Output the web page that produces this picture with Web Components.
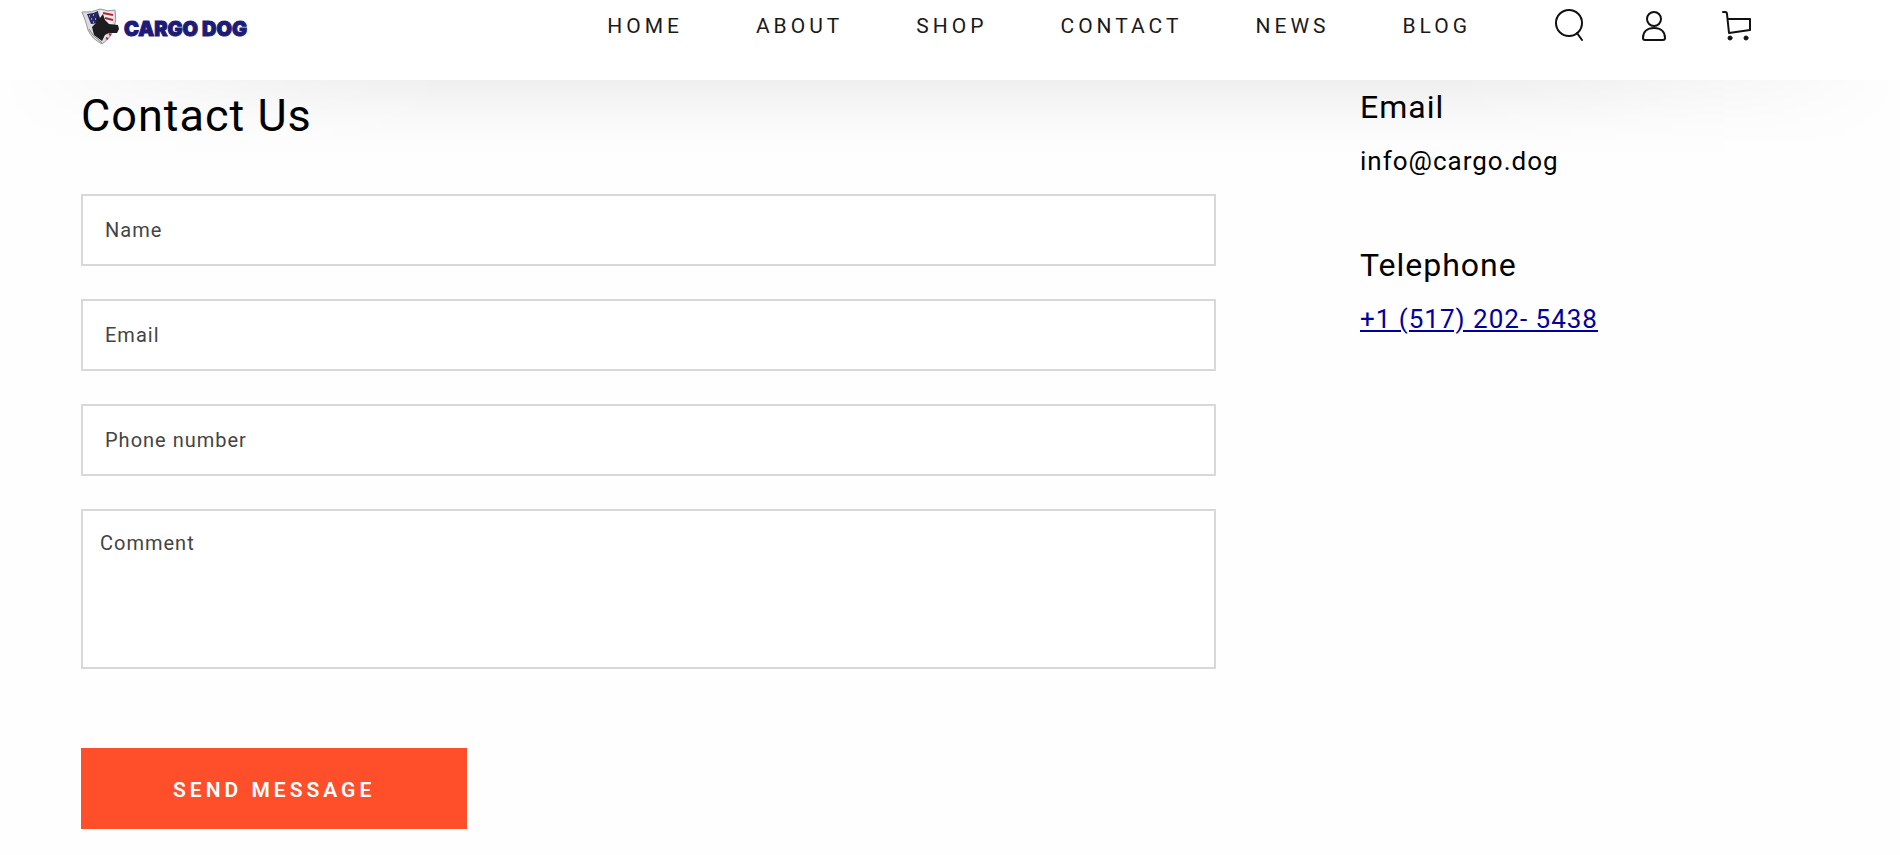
<!DOCTYPE html>
<html lang="en">
<head>
<meta charset="utf-8">
<title>Contact Us - Cargo Dog</title>
<style>
body {
    margin: 0;
    background: #fefefe;
    color: #000;
    font-family: Roboto, "Liberation Sans", sans-serif;
    font-size: 21px;
    letter-spacing: 1px;
}
</style>
</head>
<body>
<site-header>
    <brand-logo slot="logo"></brand-logo>
    <nav-link href="#home">HOME</nav-link>
    <nav-link href="#about">ABOUT</nav-link>
    <nav-link href="#shop">SHOP</nav-link>
    <nav-link href="#contact">CONTACT</nav-link>
    <nav-link href="#news">NEWS</nav-link>
    <nav-link href="#blog">BLOG</nav-link>
    <icon-button slot="tools" icon="search" label="Search"></icon-button>
    <icon-button slot="tools" icon="account" label="Log in"></icon-button>
    <icon-button slot="tools" icon="cart" label="Cart"></icon-button>
</site-header>
<contact-page>
    <contact-form slot="form"></contact-form>
    <contact-detail heading="Email">info@cargo.dog</contact-detail>
    <contact-detail heading="Telephone" href="tel:+15172025438">+1 (517) 202- 5438</contact-detail>
</contact-page>

<script>
class SiteHeader extends HTMLElement {
    constructor() {
        super();
        this.attachShadow({ mode: "open" }).innerHTML = `<style>
:host {
    display: block;
    position: relative;
    background: #fff;
}
/* soft shadow that fades out towards both sides of the window */
:host::after {
    content: "";
    position: absolute;
    top: 100%;
    left: 0;
    right: 0;
    height: 80px;
    background: linear-gradient(rgba(0, 0, 0, 0.06), rgba(0, 0, 0, 0.04) 25%, rgba(0, 0, 0, 0.02) 50%, rgba(0, 0, 0, 0.005) 80%, transparent);
    -webkit-mask-image: linear-gradient(90deg, transparent, rgba(0, 0, 0, 0.4) 7%, rgba(0, 0, 0, 0.8) 16%, #000 24%, #000 76%, rgba(0, 0, 0, 0.8) 84%, rgba(0, 0, 0, 0.4) 93%, transparent);
    mask-image: linear-gradient(90deg, transparent, rgba(0, 0, 0, 0.4) 7%, rgba(0, 0, 0, 0.8) 16%, #000 24%, #000 76%, rgba(0, 0, 0, 0.8) 84%, rgba(0, 0, 0, 0.4) 93%, transparent);
    pointer-events: none;
}
header {
    display: grid;
    grid-template-columns: 1fr auto auto;
    align-items: center;
    column-gap: 72px;
    padding: 0 137px 28px 81px;
}
nav {
    display: flex;
    gap: 73px;
}
.tools {
    display: flex;
    gap: 32px;
}
</style>
<header>
    <slot name="logo"></slot>
    <nav><slot></slot></nav>
    <div class="tools"><slot name="tools"></slot></div>
</header>`;
    }
}

class BrandLogo extends HTMLElement {
    constructor() {
        super();
        this.attachShadow({ mode: "open" }).innerHTML = `<style>
:host {
    display: block;
}
a {
    display: flex;
    align-items: center;
    gap: 3px;
    color: #1c1b78;
    text-decoration: none;
}
span {
    font-family: Inter, Roboto, sans-serif;
    font-size: 20px;
    line-height: 24px;
    font-weight: 900;
    letter-spacing: 0;
    -webkit-text-stroke: 1px #1c1b78;
    padding-top: 6px;
}
</style>
<a href="#home">
    <svg width="40" height="38" viewBox="0 0 40 38" aria-hidden="true">
        <path d="M1 5 Q11 6 19 2 Q27 5 34 3 Q36 13 33 21 Q30 31 21 37 Q11 32 7 23 Q5 14 1 5Z" fill="#dcdce0" stroke="#96969b"/>
        <path d="M6 7 Q12 7 17 4 L18 16 L10 17Z" fill="#252866"/>
        <path d="M19 3 Q27 6 33 5 L32 14 L29 24 L21 34Z" fill="#f2eeee"/>
        <path d="M22 6 L32 8 M24 11 L32 13 M28 27 L30 28 M25 31 L27 32" stroke="#b9213a" stroke-width="2"/>
        <path d="M8 9 h1 M12 8 h1 M10 12 h1 M14 12 h1 M12 15 h1" stroke="#fff"/>
        <path d="M15 16 L17 6 L19 11 L22 7 L24 13 L28 17 L37 18 L38 22 L36 26 L28 26 L24 28 L21 34 L13 28 L11 20Z" fill="#1d1d1f"/>
        <path d="M8 22 L12 28 L21 36" fill="none" stroke="#85858a" stroke-width="1"/>
    </svg>
    <span>CARGO DOG</span>
</a>`;
    }
}

class NavLink extends HTMLElement {
    constructor() {
        super();
        this.attachShadow({ mode: "open" });
    }

    connectedCallback() {
        this.shadowRoot.innerHTML = `<style>
:host {
    display: block;
}
a {
    display: block;
    color: #1a1a1a;
    line-height: 52px;
    letter-spacing: 4px;
    text-decoration: none;
}
</style>
<a href="${this.getAttribute("href")}"><slot></slot></a>`;
    }
}

const ICONS = {
    search: `<circle cx="26" cy="23" r="13"/><path d="M34 33 L39 40"/>`,
    account: `<circle cx="27" cy="19" r="7"/><path d="M27 28 C20 28 16 32 16 38 Q16 40 18 40 H36 Q38 40 38 38 C38 32 34 28 27 28Z"/>`,
    cart: `<path d="M12 12 H14 Q16 12 16 14 L18 33 L39 30 V19 H17" stroke-linejoin="round"/><circle cx="19" cy="38" r="2" fill="currentColor" stroke-width="1"/><circle cx="35" cy="38" r="2" fill="currentColor" stroke-width="1"/>`
};

class IconButton extends HTMLElement {
    constructor() {
        super();
        this.attachShadow({ mode: "open" });
    }

    connectedCallback() {
        this.shadowRoot.innerHTML = `<style>
:host {
    display: block;
}
button {
    display: block;
    padding: 0;
    border: 0;
    background: none;
    color: #111;
    cursor: pointer;
}
svg {
    display: block;
}
</style>
<button type="button" aria-label="${this.getAttribute("label")}">
    <svg width="52" height="52" viewBox="0 0 52 52" fill="none" stroke="currentColor" stroke-width="2" stroke-linecap="round">${ICONS[this.getAttribute("icon")]}</svg>
</button>`;
    }
}

class ContactPage extends HTMLElement {
    constructor() {
        super();
        this.attachShadow({ mode: "open" }).innerHTML = `<style>
:host {
    display: block;
}
main {
    display: grid;
    grid-template-columns: 1135fr 459fr;
    gap: 144px;
    padding: 8px 81px 24px;
}
aside {
    display: flex;
    flex-direction: column;
    gap: 58px;
}
</style>
<main>
    <slot name="form"></slot>
    <aside><slot></slot></aside>
</main>`;
    }
}

class ContactForm extends HTMLElement {
    constructor() {
        super();
        this.attachShadow({ mode: "open" }).innerHTML = `<style>
:host {
    display: block;
}
h1 {
    margin: 0 0 50px;
    font-size: 45px;
    line-height: 56px;
    font-weight: 400;
}
form {
    display: grid;
    gap: 33px;
}
button {
    justify-self: start;
    margin-top: 46px;
    padding: 4px 92px 0;
    border: 0;
    background: #ff4e2a;
    color: #fff;
    font: 600 21px/77px Roboto, "Liberation Sans", sans-serif;
    letter-spacing: 4px;
    cursor: pointer;
}
</style>
<h1>Contact Us</h1>
<form>
    <form-field label="Name" name="name"></form-field>
    <form-field label="Email" name="email" type="email"></form-field>
    <form-field label="Phone number" name="phone" type="tel"></form-field>
    <form-field label="Comment" name="comment" multiline></form-field>
    <button type="submit">SEND MESSAGE</button>
</form>`;
    }
}

class FormField extends HTMLElement {
    constructor() {
        super();
        this.attachShadow({ mode: "open" });
    }

    connectedCallback() {
        const label = this.getAttribute("label");
        const name = this.getAttribute("name");
        const attrs = `name="${name}" placeholder="${label}" aria-label="${label}"`;
        const control = this.hasAttribute("multiline")
            ? `<textarea ${attrs}></textarea>`
            : `<input type="${this.getAttribute("type") || "text"}" ${attrs}>`;

        this.shadowRoot.innerHTML = `<style>
:host {
    display: block;
}
input, textarea {
    display: block;
    box-sizing: border-box;
    width: 100%;
    height: 72px;
    margin: 0;
    padding: 0 22px;
    border: 2px solid #d8d8d8;
    border-radius: 0;
    background: #fff;
    color: #000;
    font: inherit;
    font-size: 20px;
    line-height: 28px;
    letter-spacing: 1px;
}
textarea {
    height: 160px;
    padding: 18px 17px;
    resize: none;
}
::placeholder {
    color: #444;
    opacity: 1;
}
</style>${control}`;
    }
}

class ContactDetail extends HTMLElement {
    constructor() {
        super();
        this.attachShadow({ mode: "open" });
    }

    connectedCallback() {
        const href = this.getAttribute("href");
        this.shadowRoot.innerHTML = `<style>
:host {
    display: block;
}
h2 {
    margin: 0 0 8px;
    font-size: 32px;
    line-height: 38px;
    font-weight: 400;
}
p {
    margin: 0;
    font-size: 26px;
    line-height: 54px;
}
a {
    color: #00009c;
}
</style>
<h2>${this.getAttribute("heading")}</h2>
<p>${href ? `<a href="${href}"><slot></slot></a>` : "<slot></slot>"}</p>`;
    }
}

customElements.define("site-header", SiteHeader);
customElements.define("brand-logo", BrandLogo);
customElements.define("nav-link", NavLink);
customElements.define("icon-button", IconButton);
customElements.define("contact-page", ContactPage);
customElements.define("contact-form", ContactForm);
customElements.define("form-field", FormField);
customElements.define("contact-detail", ContactDetail);
</script>
</body>
</html>
